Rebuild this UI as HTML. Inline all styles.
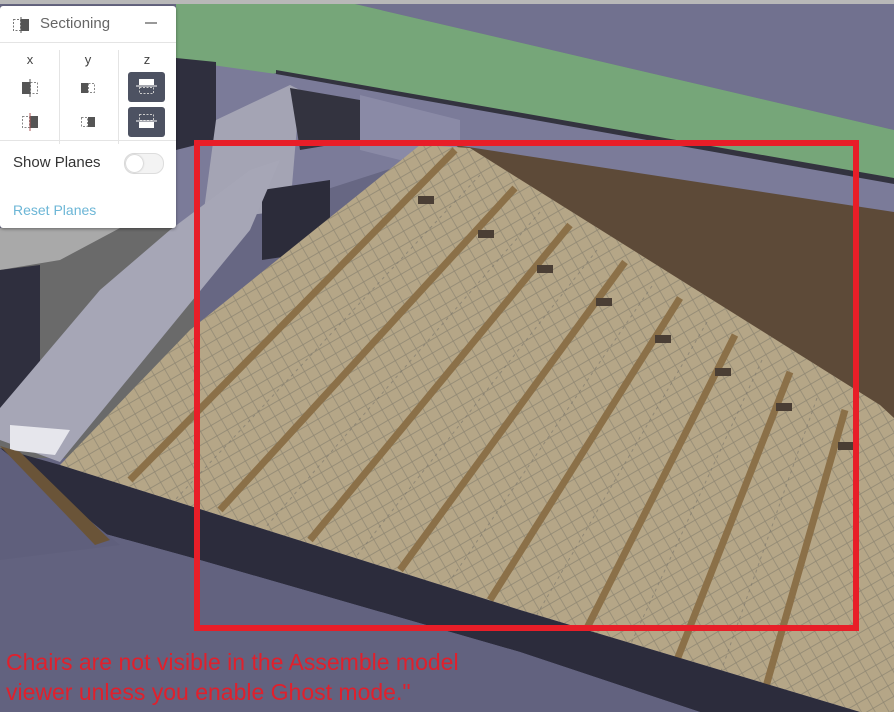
<!DOCTYPE html>
<html><head><meta charset="utf-8"><style>
html,body{margin:0;padding:0;width:894px;height:712px;overflow:hidden;background:#676783}
svg{position:absolute;left:0;top:0}
.panel{position:absolute;left:0;top:6px;width:176px;height:222px;background:#fff;border-radius:3px;box-shadow:0 1px 3px rgba(0,0,0,.4);font-family:"Liberation Sans",sans-serif}
.hd{position:absolute;left:40px;top:9px;font-size:15px;color:#666}
.min{position:absolute;left:145px;top:16px;width:12px;height:2px;background:#999}
.hl{position:absolute;left:0;width:176px;height:1px;background:#e4e4e4}
.vl{position:absolute;top:44px;height:94px;width:1px;background:#e4e4e4}
.lab{position:absolute;top:46px;font-size:13px;color:#444;width:20px;text-align:center}
.zb{position:absolute;left:128px;width:37px;height:30px;background:#4d5262;border-radius:3px}
.sp{position:absolute;left:13px;top:148px;font-size:15px;color:#333}
.tg{position:absolute;left:124px;top:147px;width:38px;height:19px;border:1px solid #ddd;border-radius:10px;background:#f3f3f3}
.tg:after{content:"";position:absolute;left:1px;top:1px;width:17px;height:17px;border-radius:50%;background:#fff;box-shadow:0 0 2px #aaa}
.rp{position:absolute;left:13px;top:196px;font-size:14px;color:#6cb6d6}
.txt{position:absolute;left:6px;font-family:"Liberation Sans",sans-serif;font-size:23px;color:#e0202c;white-space:nowrap}
</style></head><body>
<svg width="894" height="712" viewBox="0 0 894 712">
<defs>
<pattern id="ch" width="12" height="12" patternUnits="userSpaceOnUse" patternTransform="rotate(-30)">
<path d="M0 6h12M6 0v12" stroke="#6d6a60" stroke-width="0.7" opacity="0.55"/>
</pattern>
</defs>
<rect x="0" y="0" width="894" height="4" fill="#b8b8b8"/>
<polygon points="355,4 894,4 894,130" fill="#71718f"/>
<polygon points="176,4 355,4 894,130 894,182 276,73 210,92 176,100" fill="#76a679"/>
<polygon points="276,70 894,178 894,186 276,78" fill="#33333f"/>
<polygon points="176,60 276,74 894,184 894,214 455,148 200,230 176,230" fill="#7b7b99"/>
<polygon points="176,58 216,62 216,140 176,150" fill="#2f2f3e"/>
<polygon points="216,120 290,85 300,90 290,210 250,215 200,240" fill="#a4a4b4"/>
<polygon points="290,88 360,100 360,140 300,150" fill="#33333f"/>
<polygon points="360,95 460,120 460,148 400,160 360,150" fill="#8a8aa6"/>
<polygon points="262,190 330,180 330,250 262,260" fill="#2c2c3a"/>
<rect x="0" y="228" width="200" height="230" fill="#6a6a6a"/>
<polygon points="0,228 120,228 60,260 0,270" fill="#a9a9a9"/>
<polygon points="0,270 40,265 40,420 0,430" fill="#2f2f3e"/>
<polygon points="0,408 0,440 60,462 250,230 280,160 250,170 170,230 100,290" fill="#a6a6b6"/>
<polygon points="10,425 70,430 55,455 10,450" fill="#e6e6ec"/>
<polygon points="455,145 894,212 894,440 850,420" fill="#5d4a38"/>
<polygon points="420,145 470,148 880,405 894,418 894,712 860,712 520,610 60,465 190,330" fill="#b5a687"/>
<polygon points="420,145 470,148 880,405 894,418 894,712 860,712 520,610 60,465 190,330" fill="url(#ch)"/>
<g stroke="#8b7048" stroke-width="7" fill="none">
<line x1="455" y1="150" x2="130" y2="480"/>
<line x1="515" y1="188" x2="220" y2="510"/>
<line x1="570" y1="225" x2="310" y2="540"/>
<line x1="625" y1="262" x2="400" y2="570"/>
<line x1="680" y1="298" x2="490" y2="600"/>
<line x1="735" y1="335" x2="585" y2="632"/>
<line x1="790" y1="372" x2="675" y2="665"/>
<line x1="845" y1="410" x2="765" y2="690"/>
</g>
<g stroke="#77736a" stroke-width="1" fill="none" opacity="0.6" stroke-dasharray="3 4">
<line x1="480" y1="175" x2="175" y2="500"/>
<line x1="540" y1="212" x2="265" y2="528"/>
<line x1="597" y1="250" x2="355" y2="558"/>
<line x1="652" y1="286" x2="445" y2="588"/>
<line x1="707" y1="322" x2="535" y2="618"/>
<line x1="762" y1="360" x2="628" y2="650"/>
<line x1="817" y1="398" x2="718" y2="680"/>
</g>
<g fill="#4a3e34">
<rect x="418" y="196" width="16" height="8"/>
<rect x="478" y="230" width="16" height="8"/>
<rect x="537" y="265" width="16" height="8"/>
<rect x="596" y="298" width="16" height="8"/>
<rect x="655" y="335" width="16" height="8"/>
<rect x="715" y="368" width="16" height="8"/>
<rect x="776" y="403" width="16" height="8"/>
<rect x="838" y="442" width="16" height="8"/>
</g>
<polygon points="0,448 60,465 520,610 860,712 700,712 520,652 200,560 0,505" fill="#2c2c3c"/>
<polygon points="0,505 200,560 520,652 700,712 0,712" fill="#62627f"/>
<polygon points="0,448 40,480 120,545 0,560" fill="#5f5f7c"/>
<polygon points="0,446 20,452 110,540 95,545" fill="#6a5438"/>
<rect x="197" y="143" width="659" height="485" fill="none" stroke="#e81e28" stroke-width="6"/>
</svg>
<div class="panel">
<svg width="20" height="18" style="left:12px;top:10px" viewBox="0 0 20 18"><rect x="1.5" y="3.5" width="7" height="11" fill="none" stroke="#777" stroke-dasharray="2 1.5"/><rect x="9" y="3" width="8" height="12" fill="#555"/><line x1="9" y1="1" x2="9" y2="17" stroke="#555"/></svg>
<div class="hd">Sectioning</div><div class="min"></div>
<div class="hl" style="top:36px"></div>
<div class="vl" style="left:59px"></div><div class="vl" style="left:118px"></div>
<div class="lab" style="left:20px">x</div><div class="lab" style="left:78px">y</div><div class="lab" style="left:137px">z</div>
<svg width="20" height="18" style="left:21px;top:73px" viewBox="0 0 20 18"><rect x="1" y="3" width="8" height="12" fill="#555"/><rect x="9.5" y="3.5" width="7" height="11" fill="none" stroke="#888" stroke-dasharray="2 1.5"/><line x1="9" y1="0" x2="9" y2="18" stroke="#555"/></svg>
<svg width="20" height="18" style="left:21px;top:107px" viewBox="0 0 20 18"><rect x="1.5" y="3.5" width="7" height="11" fill="none" stroke="#888" stroke-dasharray="2 1.5"/><rect x="9" y="3" width="8" height="12" fill="#555"/><line x1="9" y1="0" x2="9" y2="18" stroke="#a55"/></svg>
<svg width="18" height="16" style="left:80px;top:74px" viewBox="0 0 18 16"><rect x="1" y="3" width="7" height="10" fill="#555"/><rect x="8.5" y="3.5" width="6" height="9" fill="none" stroke="#888" stroke-dasharray="2 1.5"/></svg>
<svg width="18" height="16" style="left:80px;top:108px" viewBox="0 0 18 16"><rect x="1.5" y="3.5" width="6" height="9" fill="none" stroke="#888" stroke-dasharray="2 1.5"/><rect x="8" y="3" width="7" height="10" fill="#555"/></svg>
<div class="zb" style="top:66px"><svg width="37" height="30" viewBox="0 0 37 30"><rect x="11" y="7" width="15" height="6" fill="#fff"/><rect x="11.5" y="15.5" width="14" height="6" fill="none" stroke="#ccc" stroke-dasharray="2 1.5"/><line x1="8" y1="14" x2="29" y2="14" stroke="#fff"/></svg></div>
<div class="zb" style="top:101px"><svg width="37" height="30" viewBox="0 0 37 30"><rect x="11.5" y="7.5" width="14" height="6" fill="none" stroke="#ccc" stroke-dasharray="2 1.5"/><rect x="11" y="15" width="15" height="6" fill="#fff"/><line x1="8" y1="14" x2="29" y2="14" stroke="#fff"/></svg></div>
<div class="hl" style="top:134px"></div>
<div class="sp">Show Planes</div><div class="tg"></div>
<div class="rp">Reset Planes</div>
</div>
<div class="txt" style="top:649px">Chairs are not visible in the Assemble model</div>
<div class="txt" style="top:679px">viewer unless you enable Ghost mode."</div>
</body></html>
